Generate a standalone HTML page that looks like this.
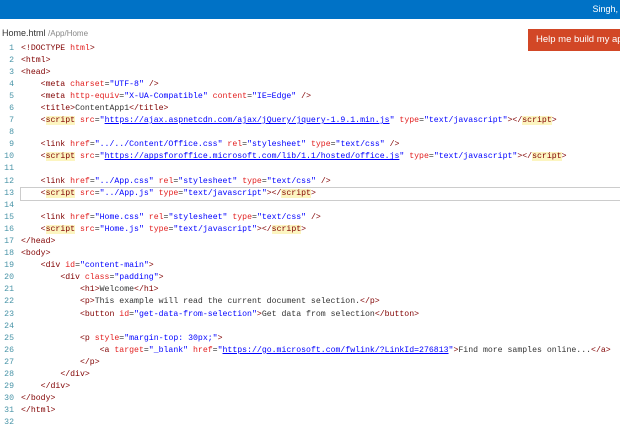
<!DOCTYPE html>
<html><head><style>
body{margin:0;width:620px;height:432px;background:#fff;overflow:hidden;position:relative;font-family:"Liberation Sans",sans-serif}
.top{position:absolute;left:0;top:0;width:620px;height:19px;background:#0072c6}
.user{position:absolute;right:2px;top:4px;color:#fff;font-size:9px}
.file{position:absolute;left:2px;top:28px;font-size:9px;color:#333}
.file span{color:#888;font-size:8px}
.btn{position:absolute;left:528px;top:29px;width:92px;height:22px;background:#d24726;color:#fff;font-size:9.5px;line-height:22px;padding-left:8px;box-sizing:border-box;white-space:nowrap;overflow:hidden}
.code{position:absolute;left:0;top:42.5px;font-family:"Liberation Mono",monospace;font-size:8.2px;line-height:12.1px;white-space:pre;color:#333}
.ln{display:inline-block;width:14px;text-align:right;color:#4a95a8;margin-right:7px}
.t{color:#800000}.a{color:#e21f1f}.v{color:#0000ff}.u{color:#0000ff;text-decoration:underline}
.h{background:#fcf5c0;color:#800000}
.cur{outline:1px solid #ccc;display:inline-block;width:600px}
</style></head><body>
<div class="top"><div class="user">Singh,</div></div>
<div class="file">Home.html <span>/App/Home</span></div>
<div class="btn">Help me build my app</div>
<div class="code"><span class="ln">1</span><span class="t">&lt;!DOCTYPE</span> <span class="a">html</span><span class="t">&gt;</span>
<span class="ln">2</span><span class="t">&lt;html&gt;</span>
<span class="ln">3</span><span class="t">&lt;head&gt;</span>
<span class="ln">4</span>    <span class="t">&lt;meta</span> <span class="a">charset</span>=<span class="v">"UTF-8"</span> <span class="t">/&gt;</span>
<span class="ln">5</span>    <span class="t">&lt;meta</span> <span class="a">http-equiv</span>=<span class="v">"X-UA-Compatible"</span> <span class="a">content</span>=<span class="v">"IE=Edge"</span> <span class="t">/&gt;</span>
<span class="ln">6</span>    <span class="t">&lt;title&gt;</span>ContentApp1<span class="t">&lt;/title&gt;</span>
<span class="ln">7</span>    <span class="t">&lt;</span><span class="h">script</span> <span class="a">src</span>=<span class="v">"</span><span class="u">https://ajax.aspnetcdn.com/ajax/jQuery/jquery-1.9.1.min.js</span><span class="v">"</span> <span class="a">type</span>=<span class="v">"text/javascript"</span><span class="t">&gt;&lt;/</span><span class="h">script</span><span class="t">&gt;</span>
<span class="ln">8</span>
<span class="ln">9</span>    <span class="t">&lt;link</span> <span class="a">href</span>=<span class="v">"../../Content/Office.css"</span> <span class="a">rel</span>=<span class="v">"stylesheet"</span> <span class="a">type</span>=<span class="v">"text/css"</span> <span class="t">/&gt;</span>
<span class="ln">10</span>    <span class="t">&lt;</span><span class="h">script</span> <span class="a">src</span>=<span class="v">"</span><span class="u">https://appsforoffice.microsoft.com/lib/1.1/hosted/office.js</span><span class="v">"</span> <span class="a">type</span>=<span class="v">"text/javascript"</span><span class="t">&gt;&lt;/</span><span class="h">script</span><span class="t">&gt;</span>
<span class="ln">11</span>
<span class="ln">12</span>    <span class="t">&lt;link</span> <span class="a">href</span>=<span class="v">"../App.css"</span> <span class="a">rel</span>=<span class="v">"stylesheet"</span> <span class="a">type</span>=<span class="v">"text/css"</span> <span class="t">/&gt;</span>
<span class="ln">13</span><span class="cur">    <span class="t">&lt;</span><span class="h">script</span> <span class="a">src</span>=<span class="v">"../App.js"</span> <span class="a">type</span>=<span class="v">"text/javascript"</span><span class="t">&gt;&lt;/</span><span class="h">script</span><span class="t">&gt;</span></span>
<span class="ln">14</span>
<span class="ln">15</span>    <span class="t">&lt;link</span> <span class="a">href</span>=<span class="v">"Home.css"</span> <span class="a">rel</span>=<span class="v">"stylesheet"</span> <span class="a">type</span>=<span class="v">"text/css"</span> <span class="t">/&gt;</span>
<span class="ln">16</span>    <span class="t">&lt;</span><span class="h">script</span> <span class="a">src</span>=<span class="v">"Home.js"</span> <span class="a">type</span>=<span class="v">"text/javascript"</span><span class="t">&gt;&lt;/</span><span class="h">script</span><span class="t">&gt;</span>
<span class="ln">17</span><span class="t">&lt;/head&gt;</span>
<span class="ln">18</span><span class="t">&lt;body&gt;</span>
<span class="ln">19</span>    <span class="t">&lt;div</span> <span class="a">id</span>=<span class="v">"content-main"</span><span class="t">&gt;</span>
<span class="ln">20</span>        <span class="t">&lt;div</span> <span class="a">class</span>=<span class="v">"padding"</span><span class="t">&gt;</span>
<span class="ln">21</span>            <span class="t">&lt;h1&gt;</span>Welcome<span class="t">&lt;/h1&gt;</span>
<span class="ln">22</span>            <span class="t">&lt;p&gt;</span>This example will read the current document selection.<span class="t">&lt;/p&gt;</span>
<span class="ln">23</span>            <span class="t">&lt;button</span> <span class="a">id</span>=<span class="v">"get-data-from-selection"</span><span class="t">&gt;</span>Get data from selection<span class="t">&lt;/button&gt;</span>
<span class="ln">24</span>
<span class="ln">25</span>            <span class="t">&lt;p</span> <span class="a">style</span>=<span class="v">"margin-top: 30px;"</span><span class="t">&gt;</span>
<span class="ln">26</span>                <span class="t">&lt;a</span> <span class="a">target</span>=<span class="v">"_blank"</span> <span class="a">href</span>=<span class="v">"</span><span class="u">https://go.microsoft.com/fwlink/?LinkId=276813</span><span class="v">"</span><span class="t">&gt;</span>Find more samples online...<span class="t">&lt;/a&gt;</span>
<span class="ln">27</span>            <span class="t">&lt;/p&gt;</span>
<span class="ln">28</span>        <span class="t">&lt;/div&gt;</span>
<span class="ln">29</span>    <span class="t">&lt;/div&gt;</span>
<span class="ln">30</span><span class="t">&lt;/body&gt;</span>
<span class="ln">31</span><span class="t">&lt;/html&gt;</span>
<span class="ln">32</span></div>
</body></html>
